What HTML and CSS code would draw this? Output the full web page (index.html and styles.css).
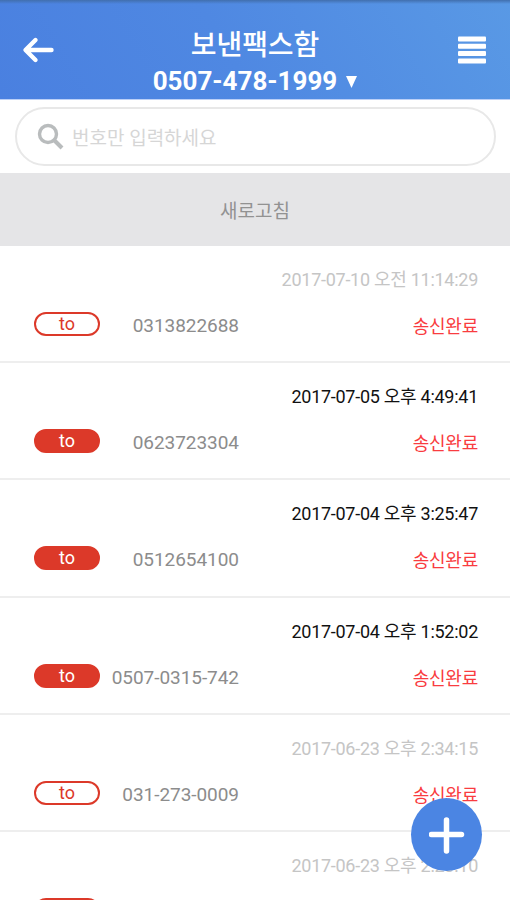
FILE: index.html
```html
<!DOCTYPE html>
<html lang="ko">
<head>
<meta charset="utf-8">
<meta name="viewport" content="width=device-width, initial-scale=1">
<title>보낸팩스함</title>
<link rel="stylesheet" href="styles.css">
</head>
<body>
<div class="app">
  <header class="header">
    <button class="icon-button" aria-label="뒤로">
      <svg width="32" height="28" viewBox="0 0 32 28" fill="none" stroke="#fff" stroke-width="4.400" stroke-linecap="round" stroke-linejoin="round"><path d="M13.500 4 3.500 14l10 10M4 14h25.500"/></svg>
    </button>
    <div class="heading">
      <h1 class="title">보낸팩스함</h1>
      <div class="account"><span>0507-478-1999</span><svg width="11" height="12" viewBox="0 0 12 13"><path d="M0 0h12L6 13z" fill="#fff"/></svg></div>
    </div>
    <button class="icon-button" aria-label="메뉴">
      <svg width="28" height="28" viewBox="0 0 28 28" fill="#fff"><rect y="0.500" width="28" height="5" rx="1"/><rect y="7.800" width="28" height="5" rx="1"/><rect y="15.100" width="28" height="5" rx="1"/><rect y="22.400" width="28" height="5" rx="1"/></svg>
    </button>
  </header>
  <div class="search-bar">
    <label class="search">
      <svg width="27" height="27" viewBox="0 0 27 27" fill="none" stroke="#b9bcbd"><circle cx="11" cy="11" r="8.500" stroke-width="3.400"/><path d="m17 17 8 8" stroke-width="4"/></svg>
      <span class="placeholder">번호만 입력하세요</span>
    </label>
  </div>
  <button class="refresh">새로고침</button>
  <main class="list">
    <article class="row read"><time class="date">2017-07-10 오전 11:14:29</time><span class="badge">to</span><span class="number">0313822688</span><span class="status">송신완료</span></article>
    <article class="row"><time class="date">2017-07-05 오후 4:49:41</time><span class="badge">to</span><span class="number">0623723304</span><span class="status">송신완료</span></article>
    <article class="row"><time class="date">2017-07-04 오후 3:25:47</time><span class="badge">to</span><span class="number">0512654100</span><span class="status">송신완료</span></article>
    <article class="row"><time class="date">2017-07-04 오후 1:52:02</time><span class="badge">to</span><span class="number">0507-0315-742</span><span class="status">송신완료</span></article>
    <article class="row read"><time class="date">2017-06-23 오후 2:34:15</time><span class="badge">to</span><span class="number">031-273-0009</span><span class="status">송신완료</span></article>
    <article class="row read"><time class="date">2017-06-23 오후 2:23:10</time><span class="badge"></span></article>
  </main>
  <button class="compose" aria-label="새 팩스">
    <svg width="36" height="38" viewBox="0 0 36 38" fill="none" stroke="#fff" stroke-width="5.500" stroke-linecap="round"><path d="M17.500 4v31M2.500 18.500h30"/></svg>
  </button>
</div>
</body>
</html>
```
FILE: styles.css
```css
* { box-sizing: border-box; }
body {
  margin: 0;
  overflow: hidden;
  background: #fff;
  font-family: Roboto, "Noto Sans CJK KR", sans-serif;
}
button { border: 0; padding: 0; font: inherit; background: none; }
svg { display: block; flex: none; }
.app { position: relative; height: 900px; overflow: hidden; }
.header {
  height: 100px;
  display: grid;
  grid-template-columns: 76px 1fr 76px;
  background: linear-gradient(180deg, #416fae 0, rgba(75, 130, 220, 0) 4px), linear-gradient(60deg, #4a80e0 0%, #4f88e2 45%, #5999e5 100%);
  border-bottom: 1px solid #bcd0f7;
}
.icon-button { display: grid; place-items: center; color: #fff; }
.heading { padding-top: 28px; text-align: center; color: #fff; }
.title { margin: 0; font-size: 28px; line-height: 36px; font-weight: 500; letter-spacing: -0.1px; }
.account {
  display: flex;
  align-items: center;
  justify-content: center;
  gap: 9px;
  font-size: 26px;
  line-height: 35px;
  font-weight: 700;
}
.search-bar { height: 73px; padding: 7px 14px 7px 15px; }
.search {
  height: 59px;
  display: flex;
  align-items: center;
  gap: 8px;
  padding-left: 20px;
  border: 2px solid #e8e8e8;
  border-radius: 30px;
}
.placeholder { color: #d6d6d6; font-size: 19px; }
.refresh {
  display: block;
  width: 100%;
  height: 73px;
  background: #e5e5e7;
  color: #929292;
  font-size: 19px;
}
.row {
  height: 117.200px;
  display: grid;
  grid-template-columns: 66px 139px 1fr;
  grid-template-rows: 36px 30px;
  row-gap: 13px;
  align-items: center;
  padding: 14px 32px 0 34px;
  border-bottom: 2px solid #eee;
}
.date {
  grid-column: 1 / -1;
  justify-self: end;
  color: #111;
  font-size: 18px;
  letter-spacing: -0.270px;
}
.read .date { color: #c5c5c5; }
.badge {
  height: 24px;
  border: 2px solid #dc3929;
  border-radius: 12px;
  background: #dc3929;
  color: #fff;
  font-size: 18px;
  line-height: 19px;
  text-align: center;
}
.read .badge { background: #fff; color: #dc3929; }
.number { justify-self: end; padding-top: 3px; color: #8c8c8c; font-size: 19px; letter-spacing: -0.050px; }
.status { justify-self: end; padding-top: 2px; color: #f93c40; font-size: 18px; letter-spacing: -0.250px; }
.compose {
  position: absolute;
  right: 28px;
  bottom: 29px;
  width: 71px;
  height: 73px;
  display: grid;
  place-items: center;
  border-radius: 50%;
  background: #4b85e3;
}
```
